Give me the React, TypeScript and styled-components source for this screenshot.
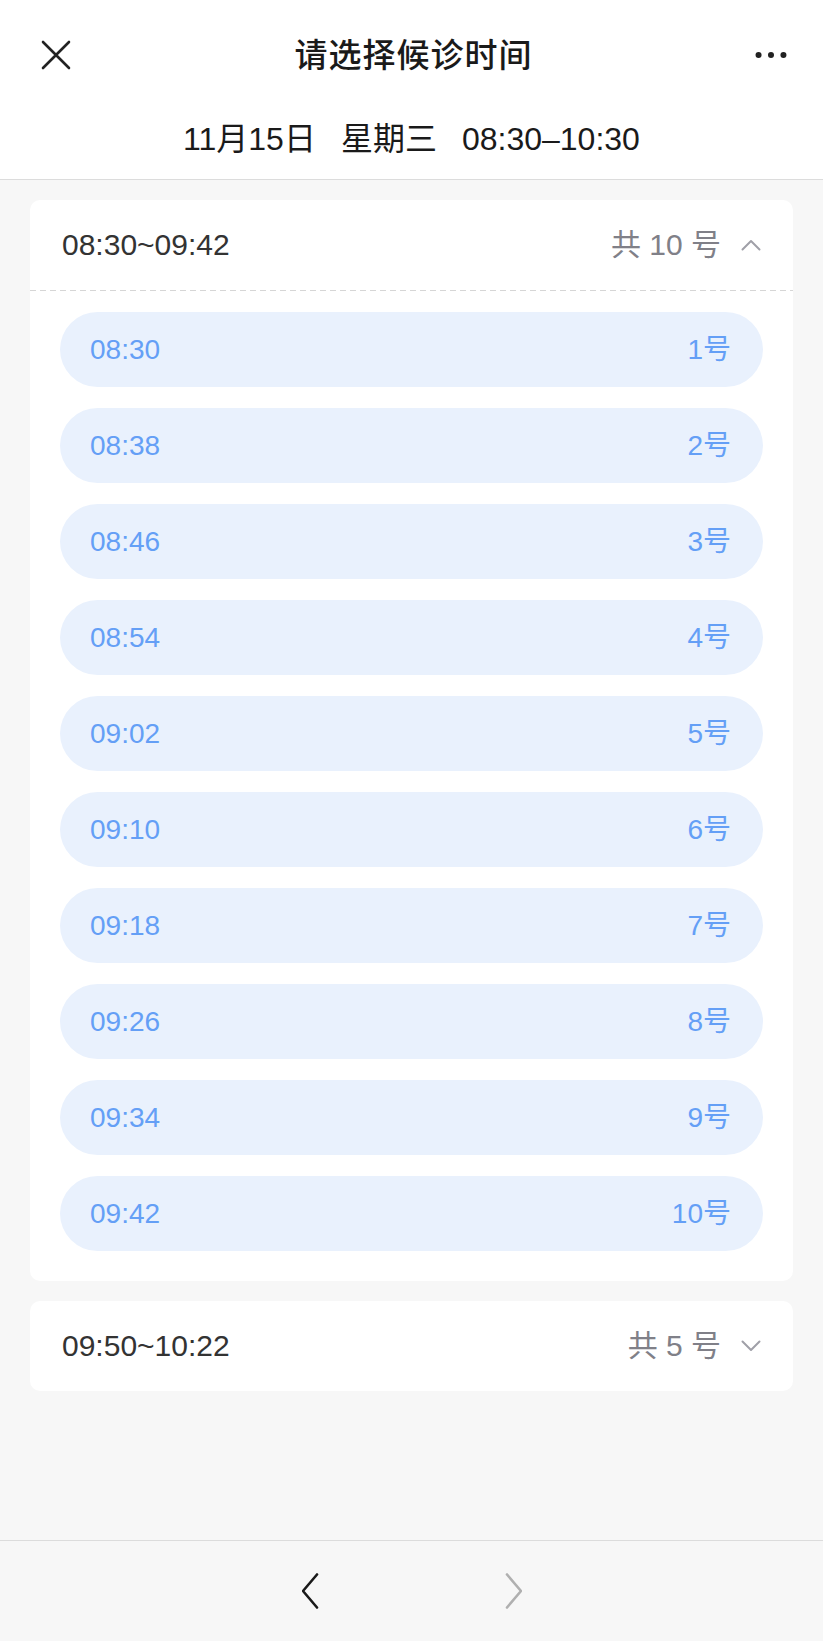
import styled, { createGlobalStyle } from "styled-components";

const GlobalStyle = createGlobalStyle`
  html, body {
    margin: 0;
    padding: 0;
    background: #f7f7f7;
    font-family: "Liberation Sans", "Noto Sans CJK SC", sans-serif;
  }
  #root {
    min-height: 100vh;
  }
`;

const Page = styled.div`
  display: flex;
  flex-direction: column;
  min-height: 100vh;
  background: #f7f7f7;
`;

const Header = styled.header`
  background: #ffffff;
  border-bottom: 1px solid #dcdcdc;
  height: 179px;
  display: flex;
  flex-direction: column;
`;

const NavBar = styled.div`
  height: 110px;
  display: flex;
  align-items: center;
  justify-content: space-between;
  padding: 0 36px 0 40px;
  box-sizing: border-box;
`;

const Title = styled.h1`
  margin: 0;
  font-size: 33px;
  font-weight: 500;
  color: #1a1a1a;
  letter-spacing: 1px;
  line-height: 1;
`;

const IconButton = styled.div`
  width: 32px;
  height: 32px;
  display: flex;
  align-items: center;
  justify-content: center;
`;

const SubTitle = styled.div`
  flex: 1;
  display: flex;
  justify-content: center;
  align-items: center;
  gap: 25px;
  padding-bottom: 12px;
  font-size: 32px;
  line-height: 1;
  color: #1a1a1a;
`;

const Content = styled.main`
  flex: 1;
  display: flex;
  flex-direction: column;
  gap: 20px;
  padding: 20px 30px;
`;

const Card = styled.section`
  background: #ffffff;
  border-radius: 10px;
`;

const CardHeader = styled.div<{ $open?: boolean }>`
  height: 90px;
  display: flex;
  align-items: center;
  justify-content: space-between;
  padding: 0 32px;
  box-sizing: border-box;
  position: relative;
  line-height: 1;
  ${(p) =>
    p.$open &&
    `
    &::after {
      content: "";
      position: absolute;
      left: 0;
      right: 0;
      bottom: -1px;
      height: 1.5px;
      background: repeating-linear-gradient(90deg, #d6d6d6 0 6px, transparent 6px 10px);
    }
  `}
`;

const RangeText = styled.span`
  font-size: 30px;
  color: #333333;
`;

const Count = styled.span`
  display: flex;
  align-items: center;
  gap: 20px;
  font-size: 30px;
  color: #808088;
`;

const SlotList = styled.div`
  display: flex;
  flex-direction: column;
  gap: 21px;
  padding: 22px 30px 30px;
`;

const Slot = styled.div`
  height: 75px;
  border-radius: 38px;
  background: #e9f1fd;
  display: flex;
  align-items: center;
  justify-content: space-between;
  padding: 0 32px 0 30px;
  font-size: 28px;
  line-height: 1;
  color: #649ff6;
`;

const Footer = styled.footer`
  height: 100px;
  border-top: 1px solid #dcdcdc;
  background: #f7f7f7;
  display: flex;
  align-items: center;
  justify-content: center;
  gap: 180px;
`;

const Chevron = ({ dir, color }: { dir: "up" | "down"; color: string }) => (
  <svg width="20" height="12" viewBox="0 0 20 12" fill="none">
    <path
      d={dir === "up" ? "M1.5 10.5 L10 2 L18.5 10.5" : "M1.5 1.5 L10 10 L18.5 1.5"}
      stroke={color}
      strokeWidth="2"
      strokeLinecap="round"
      strokeLinejoin="round"
    />
  </svg>
);

const PagerArrow = ({ dir, color }: { dir: "left" | "right"; color: string }) => (
  <svg width="20" height="36" viewBox="0 0 20 36" fill="none">
    <path
      d={dir === "left" ? "M17 1.5 L3 18 L17 34.5" : "M3 1.5 L17 18 L3 34.5"}
      stroke={color}
      strokeWidth="2.6"
      strokeLinecap="round"
      strokeLinejoin="round"
      transform={dir === "left" ? "translate(-2 0)" : "translate(2 0)"}
    />
  </svg>
);

const slots = [
  "08:30",
  "08:38",
  "08:46",
  "08:54",
  "09:02",
  "09:10",
  "09:18",
  "09:26",
  "09:34",
  "09:42",
];

export default function App() {
  return (
    <Page>
      <GlobalStyle />
      <Header>
        <NavBar>
          <IconButton>
            <svg width="30" height="30" viewBox="0 0 30 30">
              <path d="M2 2 L28 28 M28 2 L2 28" stroke="#222" strokeWidth="2.6" strokeLinecap="round" />
            </svg>
          </IconButton>
          <Title>请选择候诊时间</Title>
          <IconButton>
            <svg width="36" height="8" viewBox="0 0 36 8">
              <circle cx="4" cy="4" r="3.4" fill="#222" />
              <circle cx="18" cy="4" r="3.4" fill="#222" />
              <circle cx="32" cy="4" r="3.4" fill="#222" />
            </svg>
          </IconButton>
        </NavBar>
        <SubTitle>
          <span>11月15日</span>
          <span>星期三</span>
          <span>08:30–10:30</span>
        </SubTitle>
      </Header>

      <Content>
        <Card>
          <CardHeader $open>
            <RangeText>08:30~09:42</RangeText>
            <Count>
              共 10 号
              <Chevron dir="up" color="#a0a0a8" />
            </Count>
          </CardHeader>
          <SlotList>
            {slots.map((t, i) => (
              <Slot key={t}>
                <span>{t}</span>
                <span>{i + 1}号</span>
              </Slot>
            ))}
          </SlotList>
        </Card>

        <Card>
          <CardHeader>
            <RangeText>09:50~10:22</RangeText>
            <Count>
              共 5 号
              <Chevron dir="down" color="#a0a0a8" />
            </Count>
          </CardHeader>
        </Card>
      </Content>

      <Footer>
        <PagerArrow dir="left" color="#1a1a1a" />
        <PagerArrow dir="right" color="#b0b0b0" />
      </Footer>
    </Page>
  );
}
